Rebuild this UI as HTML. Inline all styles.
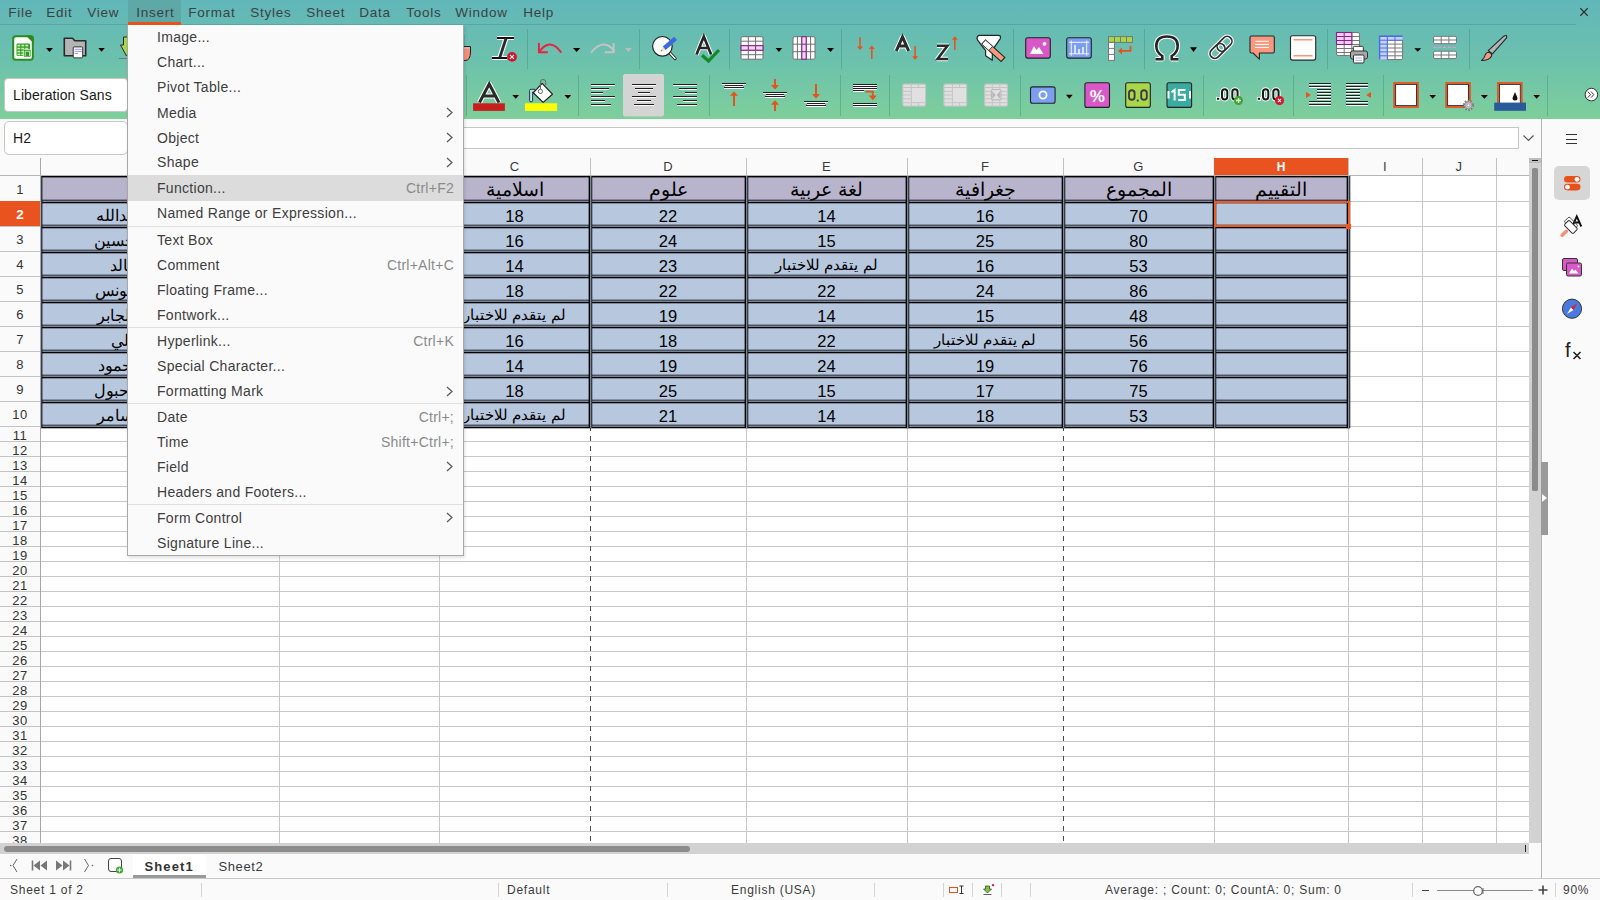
<!DOCTYPE html><html><head><meta charset="utf-8"><style>
*{margin:0;padding:0;box-sizing:border-box}
html,body{width:1600px;height:900px;overflow:hidden}
body{position:relative;font-family:"Liberation Sans",sans-serif;background:#fff;color:#333}
.a{position:absolute}
.t{white-space:nowrap;line-height:1}
.ui{font-size:13px;letter-spacing:0.55px;color:#3a3a3a}
.sm{font-size:12px;letter-spacing:0.45px;color:#3a3a3a}
svg{position:absolute;overflow:visible}
</style></head><body><div class="a" style="left:0px;top:0px;width:1600px;height:119px;background:linear-gradient(#61b6b9 0px,#66bbb5 24px,#6cc1ad 60px,#7ecf9b 119px)"></div>
<div class="a" style="left:0px;top:24px;width:1576px;height:1px;background:#5aa6a2"></div>
<div class="a" style="left:128px;top:0px;width:53px;height:22px;background:#5ea8a7"></div>
<div class="a" style="left:128px;top:22px;width:53px;height:3px;background:#e8531c"></div>
<div class="a t" style="left:8.2px;top:6px;font-size:13.5px;letter-spacing:0.75px;color:#3c4242">File</div>
<div class="a t" style="left:46.2px;top:6px;font-size:13.5px;letter-spacing:0.75px;color:#3c4242">Edit</div>
<div class="a t" style="left:87.2px;top:6px;font-size:13.5px;letter-spacing:0.75px;color:#3c4242">View</div>
<div class="a t" style="left:136.2px;top:6px;font-size:13.5px;letter-spacing:0.75px;color:#3c4242">Insert</div>
<div class="a t" style="left:188.2px;top:6px;font-size:13.5px;letter-spacing:0.75px;color:#3c4242">Format</div>
<div class="a t" style="left:250.2px;top:6px;font-size:13.5px;letter-spacing:0.75px;color:#3c4242">Styles</div>
<div class="a t" style="left:306.2px;top:6px;font-size:13.5px;letter-spacing:0.75px;color:#3c4242">Sheet</div>
<div class="a t" style="left:359.2px;top:6px;font-size:13.5px;letter-spacing:0.75px;color:#3c4242">Data</div>
<div class="a t" style="left:406.2px;top:6px;font-size:13.5px;letter-spacing:0.75px;color:#3c4242">Tools</div>
<div class="a t" style="left:455.2px;top:6px;font-size:13.5px;letter-spacing:0.75px;color:#3c4242">Window</div>
<div class="a t" style="left:523.2px;top:6px;font-size:13.5px;letter-spacing:0.75px;color:#3c4242">Help</div>
<svg style="left:1579px;top:7px" width="10" height="10"><path d="M1.3 1.3L8.7 8.7M8.7 1.3L1.3 8.7" stroke="#333" stroke-width="1.3"/></svg>
<div class="a" style="left:527px;top:29px;width:1px;height:40px;background:rgba(60,120,110,.35)"></div>
<div class="a" style="left:639px;top:29px;width:1px;height:40px;background:rgba(60,120,110,.35)"></div>
<div class="a" style="left:729px;top:29px;width:1px;height:40px;background:rgba(60,120,110,.35)"></div>
<div class="a" style="left:841px;top:29px;width:1px;height:40px;background:rgba(60,120,110,.35)"></div>
<div class="a" style="left:1013px;top:29px;width:1px;height:40px;background:rgba(60,120,110,.35)"></div>
<div class="a" style="left:1144px;top:29px;width:1px;height:40px;background:rgba(60,120,110,.35)"></div>
<div class="a" style="left:1327px;top:29px;width:1px;height:40px;background:rgba(60,120,110,.35)"></div>
<div class="a" style="left:1469px;top:29px;width:1px;height:40px;background:rgba(60,120,110,.35)"></div>
<div class="a" style="left:466px;top:75px;width:1px;height:41px;background:rgba(60,120,110,.35)"></div>
<div class="a" style="left:578px;top:75px;width:1px;height:41px;background:rgba(60,120,110,.35)"></div>
<div class="a" style="left:709px;top:75px;width:1px;height:41px;background:rgba(60,120,110,.35)"></div>
<div class="a" style="left:840px;top:75px;width:1px;height:41px;background:rgba(60,120,110,.35)"></div>
<div class="a" style="left:889px;top:75px;width:1px;height:41px;background:rgba(60,120,110,.35)"></div>
<div class="a" style="left:1020px;top:75px;width:1px;height:41px;background:rgba(60,120,110,.35)"></div>
<div class="a" style="left:1203px;top:75px;width:1px;height:41px;background:rgba(60,120,110,.35)"></div>
<div class="a" style="left:1293px;top:75px;width:1px;height:41px;background:rgba(60,120,110,.35)"></div>
<div class="a" style="left:1383px;top:75px;width:1px;height:41px;background:rgba(60,120,110,.35)"></div>
<div class="a" style="left:1547px;top:75px;width:1px;height:41px;background:rgba(60,120,110,.35)"></div>
<div class="a" style="left:4px;top:78px;width:124px;height:34px;background:#fff;border:1px solid #c8c8c8;border-radius:4px"></div>
<div class="a t" style="left:13px;top:87.5px;font-size:14px;letter-spacing:0.1px;color:#1a1a1a">Liberation Sans</div>
<div class="a" style="left:0px;top:119px;width:1541px;height:39px;background:#fafafa"></div>
<div class="a" style="left:4px;top:121px;width:124px;height:34px;background:#fff;border:1px solid #c8c8c8;border-radius:5px"></div>
<div class="a t" style="left:13px;top:130.5px;font-size:14px;letter-spacing:0.1px;color:#1a1a1a">H2</div>
<div class="a" style="left:300px;top:127px;width:1219px;height:22px;background:#fff;border:1px solid #c6c6c6"></div>
<svg style="left:1523px;top:135px" width="11" height="7"><path d="M0.5 0.5L5.5 5.5L10.5 0.5" stroke="#555" stroke-width="1.2" fill="none"/></svg>
<div class="a" style="left:1541px;top:119px;width:59px;height:759px;background:#fafafa;border-left:1px solid #b4b4b4"></div>
<div class="a" style="left:1566px;top:134px;width:11px;height:1.3px;background:#333"></div>
<div class="a" style="left:1566px;top:138.5px;width:11px;height:1.3px;background:#333"></div>
<div class="a" style="left:1566px;top:143px;width:11px;height:1.3px;background:#333"></div>
<div class="a" style="left:1554px;top:166px;width:36px;height:34px;background:#d6d6d6;border-radius:5px"></div>
<div class="a" style="left:1541px;top:462px;width:7px;height:73px;background:#9a9a9a"></div>
<svg style="left:1542px;top:494px" width="6" height="8"><path d="M0 0L5 4L0 8Z" fill="#fff"/></svg>
<div class="a" style="left:0px;top:158px;width:1529px;height:17px;background:#fafafa"></div>
<div class="a" style="left:40px;top:158px;width:1px;height:17px;background:#a8a8a8"></div>
<div class="a" style="left:279px;top:158px;width:1px;height:17px;background:#c0c0c0"></div>
<div class="a" style="left:439px;top:158px;width:1px;height:17px;background:#c0c0c0"></div>
<div class="a" style="left:590px;top:158px;width:1px;height:17px;background:#c0c0c0"></div>
<div class="a" style="left:746px;top:158px;width:1px;height:17px;background:#c0c0c0"></div>
<div class="a" style="left:907px;top:158px;width:1px;height:17px;background:#c0c0c0"></div>
<div class="a" style="left:1063px;top:158px;width:1px;height:17px;background:#c0c0c0"></div>
<div class="a" style="left:1214px;top:158px;width:1px;height:17px;background:#c0c0c0"></div>
<div class="a" style="left:1348px;top:158px;width:1px;height:17px;background:#c0c0c0"></div>
<div class="a" style="left:1422px;top:158px;width:1px;height:17px;background:#c0c0c0"></div>
<div class="a" style="left:1496px;top:158px;width:1px;height:17px;background:#c0c0c0"></div>
<div class="a" style="left:0px;top:175px;width:1529px;height:1px;background:#b4b4b4"></div>
<div class="a" style="left:1214px;top:158px;width:134px;height:17px;background:#e8531f"></div>
<div class="a t" style="left:40px;top:159.8px;width:239px;text-align:center;font-size:13px;letter-spacing:0.3px;color:#3a3a3a">A</div>
<div class="a t" style="left:279px;top:159.8px;width:160px;text-align:center;font-size:13px;letter-spacing:0.3px;color:#3a3a3a">B</div>
<div class="a t" style="left:439px;top:159.8px;width:151px;text-align:center;font-size:13px;letter-spacing:0.3px;color:#3a3a3a">C</div>
<div class="a t" style="left:590px;top:159.8px;width:156px;text-align:center;font-size:13px;letter-spacing:0.3px;color:#3a3a3a">D</div>
<div class="a t" style="left:746px;top:159.8px;width:161px;text-align:center;font-size:13px;letter-spacing:0.3px;color:#3a3a3a">E</div>
<div class="a t" style="left:907px;top:159.8px;width:156px;text-align:center;font-size:13px;letter-spacing:0.3px;color:#3a3a3a">F</div>
<div class="a t" style="left:1063px;top:159.8px;width:151px;text-align:center;font-size:13px;letter-spacing:0.3px;color:#3a3a3a">G</div>
<div class="a t" style="left:1214px;top:161px;width:134px;text-align:center;font-size:12px;font-weight:bold;color:#fff">H</div>
<div class="a t" style="left:1348px;top:159.8px;width:74px;text-align:center;font-size:13px;letter-spacing:0.3px;color:#3a3a3a">I</div>
<div class="a t" style="left:1422px;top:159.8px;width:74px;text-align:center;font-size:13px;letter-spacing:0.3px;color:#3a3a3a">J</div>
<div class="a" style="left:0px;top:176px;width:40px;height:667px;background:#fafafa"></div>
<div class="a" style="left:40px;top:176px;width:1px;height:667px;background:#a8a8a8"></div>
<div class="a t" style="left:0;top:182.5px;width:40px;text-align:center;font-size:13px;letter-spacing:0.4px;color:#333">1</div>
<div class="a" style="left:0px;top:201px;width:40px;height:1px;background:#c4c4c4"></div>
<div class="a" style="left:0px;top:201px;width:40px;height:25px;background:#e8531f"></div>
<div class="a t" style="left:0;top:208px;width:40px;text-align:center;font-size:13.5px;font-weight:bold;color:#fff">2</div>
<div class="a" style="left:0px;top:226px;width:40px;height:1px;background:#c4c4c4"></div>
<div class="a t" style="left:0;top:232.5px;width:40px;text-align:center;font-size:13px;letter-spacing:0.4px;color:#333">3</div>
<div class="a" style="left:0px;top:251px;width:40px;height:1px;background:#c4c4c4"></div>
<div class="a t" style="left:0;top:257.5px;width:40px;text-align:center;font-size:13px;letter-spacing:0.4px;color:#333">4</div>
<div class="a" style="left:0px;top:276px;width:40px;height:1px;background:#c4c4c4"></div>
<div class="a t" style="left:0;top:282.5px;width:40px;text-align:center;font-size:13px;letter-spacing:0.4px;color:#333">5</div>
<div class="a" style="left:0px;top:301px;width:40px;height:1px;background:#c4c4c4"></div>
<div class="a t" style="left:0;top:307.5px;width:40px;text-align:center;font-size:13px;letter-spacing:0.4px;color:#333">6</div>
<div class="a" style="left:0px;top:326px;width:40px;height:1px;background:#c4c4c4"></div>
<div class="a t" style="left:0;top:332.5px;width:40px;text-align:center;font-size:13px;letter-spacing:0.4px;color:#333">7</div>
<div class="a" style="left:0px;top:351px;width:40px;height:1px;background:#c4c4c4"></div>
<div class="a t" style="left:0;top:357.5px;width:40px;text-align:center;font-size:13px;letter-spacing:0.4px;color:#333">8</div>
<div class="a" style="left:0px;top:376px;width:40px;height:1px;background:#c4c4c4"></div>
<div class="a t" style="left:0;top:382.5px;width:40px;text-align:center;font-size:13px;letter-spacing:0.4px;color:#333">9</div>
<div class="a" style="left:0px;top:401px;width:40px;height:1px;background:#c4c4c4"></div>
<div class="a t" style="left:0;top:407.5px;width:40px;text-align:center;font-size:13px;letter-spacing:0.4px;color:#333">10</div>
<div class="a" style="left:0px;top:426px;width:40px;height:1px;background:#c4c4c4"></div>
<div class="a t" style="left:0;top:429px;width:40px;text-align:center;font-size:13px;letter-spacing:0.4px;color:#333">11</div>
<div class="a" style="left:0px;top:441px;width:40px;height:1px;background:#c4c4c4"></div>
<div class="a t" style="left:0;top:444px;width:40px;text-align:center;font-size:13px;letter-spacing:0.4px;color:#333">12</div>
<div class="a" style="left:0px;top:456px;width:40px;height:1px;background:#c4c4c4"></div>
<div class="a t" style="left:0;top:459px;width:40px;text-align:center;font-size:13px;letter-spacing:0.4px;color:#333">13</div>
<div class="a" style="left:0px;top:471px;width:40px;height:1px;background:#c4c4c4"></div>
<div class="a t" style="left:0;top:474px;width:40px;text-align:center;font-size:13px;letter-spacing:0.4px;color:#333">14</div>
<div class="a" style="left:0px;top:486px;width:40px;height:1px;background:#c4c4c4"></div>
<div class="a t" style="left:0;top:489px;width:40px;text-align:center;font-size:13px;letter-spacing:0.4px;color:#333">15</div>
<div class="a" style="left:0px;top:501px;width:40px;height:1px;background:#c4c4c4"></div>
<div class="a t" style="left:0;top:504px;width:40px;text-align:center;font-size:13px;letter-spacing:0.4px;color:#333">16</div>
<div class="a" style="left:0px;top:516px;width:40px;height:1px;background:#c4c4c4"></div>
<div class="a t" style="left:0;top:519px;width:40px;text-align:center;font-size:13px;letter-spacing:0.4px;color:#333">17</div>
<div class="a" style="left:0px;top:531px;width:40px;height:1px;background:#c4c4c4"></div>
<div class="a t" style="left:0;top:534px;width:40px;text-align:center;font-size:13px;letter-spacing:0.4px;color:#333">18</div>
<div class="a" style="left:0px;top:546px;width:40px;height:1px;background:#c4c4c4"></div>
<div class="a t" style="left:0;top:549px;width:40px;text-align:center;font-size:13px;letter-spacing:0.4px;color:#333">19</div>
<div class="a" style="left:0px;top:561px;width:40px;height:1px;background:#c4c4c4"></div>
<div class="a t" style="left:0;top:564px;width:40px;text-align:center;font-size:13px;letter-spacing:0.4px;color:#333">20</div>
<div class="a" style="left:0px;top:576px;width:40px;height:1px;background:#c4c4c4"></div>
<div class="a t" style="left:0;top:579px;width:40px;text-align:center;font-size:13px;letter-spacing:0.4px;color:#333">21</div>
<div class="a" style="left:0px;top:591px;width:40px;height:1px;background:#c4c4c4"></div>
<div class="a t" style="left:0;top:594px;width:40px;text-align:center;font-size:13px;letter-spacing:0.4px;color:#333">22</div>
<div class="a" style="left:0px;top:606px;width:40px;height:1px;background:#c4c4c4"></div>
<div class="a t" style="left:0;top:609px;width:40px;text-align:center;font-size:13px;letter-spacing:0.4px;color:#333">23</div>
<div class="a" style="left:0px;top:621px;width:40px;height:1px;background:#c4c4c4"></div>
<div class="a t" style="left:0;top:624px;width:40px;text-align:center;font-size:13px;letter-spacing:0.4px;color:#333">24</div>
<div class="a" style="left:0px;top:636px;width:40px;height:1px;background:#c4c4c4"></div>
<div class="a t" style="left:0;top:639px;width:40px;text-align:center;font-size:13px;letter-spacing:0.4px;color:#333">25</div>
<div class="a" style="left:0px;top:651px;width:40px;height:1px;background:#c4c4c4"></div>
<div class="a t" style="left:0;top:654px;width:40px;text-align:center;font-size:13px;letter-spacing:0.4px;color:#333">26</div>
<div class="a" style="left:0px;top:666px;width:40px;height:1px;background:#c4c4c4"></div>
<div class="a t" style="left:0;top:669px;width:40px;text-align:center;font-size:13px;letter-spacing:0.4px;color:#333">27</div>
<div class="a" style="left:0px;top:681px;width:40px;height:1px;background:#c4c4c4"></div>
<div class="a t" style="left:0;top:684px;width:40px;text-align:center;font-size:13px;letter-spacing:0.4px;color:#333">28</div>
<div class="a" style="left:0px;top:696px;width:40px;height:1px;background:#c4c4c4"></div>
<div class="a t" style="left:0;top:699px;width:40px;text-align:center;font-size:13px;letter-spacing:0.4px;color:#333">29</div>
<div class="a" style="left:0px;top:711px;width:40px;height:1px;background:#c4c4c4"></div>
<div class="a t" style="left:0;top:714px;width:40px;text-align:center;font-size:13px;letter-spacing:0.4px;color:#333">30</div>
<div class="a" style="left:0px;top:726px;width:40px;height:1px;background:#c4c4c4"></div>
<div class="a t" style="left:0;top:729px;width:40px;text-align:center;font-size:13px;letter-spacing:0.4px;color:#333">31</div>
<div class="a" style="left:0px;top:741px;width:40px;height:1px;background:#c4c4c4"></div>
<div class="a t" style="left:0;top:744px;width:40px;text-align:center;font-size:13px;letter-spacing:0.4px;color:#333">32</div>
<div class="a" style="left:0px;top:756px;width:40px;height:1px;background:#c4c4c4"></div>
<div class="a t" style="left:0;top:759px;width:40px;text-align:center;font-size:13px;letter-spacing:0.4px;color:#333">33</div>
<div class="a" style="left:0px;top:771px;width:40px;height:1px;background:#c4c4c4"></div>
<div class="a t" style="left:0;top:774px;width:40px;text-align:center;font-size:13px;letter-spacing:0.4px;color:#333">34</div>
<div class="a" style="left:0px;top:786px;width:40px;height:1px;background:#c4c4c4"></div>
<div class="a t" style="left:0;top:789px;width:40px;text-align:center;font-size:13px;letter-spacing:0.4px;color:#333">35</div>
<div class="a" style="left:0px;top:801px;width:40px;height:1px;background:#c4c4c4"></div>
<div class="a t" style="left:0;top:804px;width:40px;text-align:center;font-size:13px;letter-spacing:0.4px;color:#333">36</div>
<div class="a" style="left:0px;top:816px;width:40px;height:1px;background:#c4c4c4"></div>
<div class="a t" style="left:0;top:819px;width:40px;text-align:center;font-size:13px;letter-spacing:0.4px;color:#333">37</div>
<div class="a" style="left:0px;top:831px;width:40px;height:1px;background:#c4c4c4"></div>
<div class="a t" style="left:0;top:834px;width:40px;text-align:center;font-size:13px;letter-spacing:0.4px;color:#333">38</div>
<div class="a" style="left:0px;top:846px;width:40px;height:1px;background:#c4c4c4"></div>
<div class="a" style="left:41px;top:201px;width:1488px;height:1px;background:#c8c8c8"></div>
<div class="a" style="left:41px;top:226px;width:1488px;height:1px;background:#c8c8c8"></div>
<div class="a" style="left:41px;top:251px;width:1488px;height:1px;background:#c8c8c8"></div>
<div class="a" style="left:41px;top:276px;width:1488px;height:1px;background:#c8c8c8"></div>
<div class="a" style="left:41px;top:301px;width:1488px;height:1px;background:#c8c8c8"></div>
<div class="a" style="left:41px;top:326px;width:1488px;height:1px;background:#c8c8c8"></div>
<div class="a" style="left:41px;top:351px;width:1488px;height:1px;background:#c8c8c8"></div>
<div class="a" style="left:41px;top:376px;width:1488px;height:1px;background:#c8c8c8"></div>
<div class="a" style="left:41px;top:401px;width:1488px;height:1px;background:#c8c8c8"></div>
<div class="a" style="left:41px;top:426px;width:1488px;height:1px;background:#c8c8c8"></div>
<div class="a" style="left:41px;top:441px;width:1488px;height:1px;background:#c8c8c8"></div>
<div class="a" style="left:41px;top:456px;width:1488px;height:1px;background:#c8c8c8"></div>
<div class="a" style="left:41px;top:471px;width:1488px;height:1px;background:#c8c8c8"></div>
<div class="a" style="left:41px;top:486px;width:1488px;height:1px;background:#c8c8c8"></div>
<div class="a" style="left:41px;top:501px;width:1488px;height:1px;background:#c8c8c8"></div>
<div class="a" style="left:41px;top:516px;width:1488px;height:1px;background:#c8c8c8"></div>
<div class="a" style="left:41px;top:531px;width:1488px;height:1px;background:#c8c8c8"></div>
<div class="a" style="left:41px;top:546px;width:1488px;height:1px;background:#c8c8c8"></div>
<div class="a" style="left:41px;top:561px;width:1488px;height:1px;background:#c8c8c8"></div>
<div class="a" style="left:41px;top:576px;width:1488px;height:1px;background:#c8c8c8"></div>
<div class="a" style="left:41px;top:591px;width:1488px;height:1px;background:#c8c8c8"></div>
<div class="a" style="left:41px;top:606px;width:1488px;height:1px;background:#c8c8c8"></div>
<div class="a" style="left:41px;top:621px;width:1488px;height:1px;background:#c8c8c8"></div>
<div class="a" style="left:41px;top:636px;width:1488px;height:1px;background:#c8c8c8"></div>
<div class="a" style="left:41px;top:651px;width:1488px;height:1px;background:#c8c8c8"></div>
<div class="a" style="left:41px;top:666px;width:1488px;height:1px;background:#c8c8c8"></div>
<div class="a" style="left:41px;top:681px;width:1488px;height:1px;background:#c8c8c8"></div>
<div class="a" style="left:41px;top:696px;width:1488px;height:1px;background:#c8c8c8"></div>
<div class="a" style="left:41px;top:711px;width:1488px;height:1px;background:#c8c8c8"></div>
<div class="a" style="left:41px;top:726px;width:1488px;height:1px;background:#c8c8c8"></div>
<div class="a" style="left:41px;top:741px;width:1488px;height:1px;background:#c8c8c8"></div>
<div class="a" style="left:41px;top:756px;width:1488px;height:1px;background:#c8c8c8"></div>
<div class="a" style="left:41px;top:771px;width:1488px;height:1px;background:#c8c8c8"></div>
<div class="a" style="left:41px;top:786px;width:1488px;height:1px;background:#c8c8c8"></div>
<div class="a" style="left:41px;top:801px;width:1488px;height:1px;background:#c8c8c8"></div>
<div class="a" style="left:41px;top:816px;width:1488px;height:1px;background:#c8c8c8"></div>
<div class="a" style="left:41px;top:831px;width:1488px;height:1px;background:#c8c8c8"></div>
<div class="a" style="left:41px;top:846px;width:1488px;height:1px;background:#c8c8c8"></div>
<div class="a" style="left:279px;top:176px;width:1px;height:667px;background:#c8c8c8"></div>
<div class="a" style="left:439px;top:176px;width:1px;height:667px;background:#c8c8c8"></div>
<div class="a" style="left:590px;top:176px;width:1px;height:250px;background:#c8c8c8"></div>
<div class="a" style="left:746px;top:176px;width:1px;height:667px;background:#c8c8c8"></div>
<div class="a" style="left:907px;top:176px;width:1px;height:667px;background:#c8c8c8"></div>
<div class="a" style="left:1063px;top:176px;width:1px;height:250px;background:#c8c8c8"></div>
<div class="a" style="left:1214px;top:176px;width:1px;height:667px;background:#c8c8c8"></div>
<div class="a" style="left:1348px;top:176px;width:1px;height:667px;background:#c8c8c8"></div>
<div class="a" style="left:1422px;top:176px;width:1px;height:667px;background:#c8c8c8"></div>
<div class="a" style="left:1496px;top:176px;width:1px;height:667px;background:#c8c8c8"></div>
<div class="a" style="left:590px;top:426px;width:1px;height:417px;background:repeating-linear-gradient(#4a4a4a 0 5px,transparent 5px 10px)"></div>
<div class="a" style="left:1063px;top:426px;width:1px;height:417px;background:repeating-linear-gradient(#4a4a4a 0 5px,transparent 5px 10px)"></div>
<div class="a" style="left:41px;top:176px;width:1307px;height:25px;background:#b8b4cc"></div>
<div class="a" style="left:41px;top:201px;width:1307px;height:225px;background:#b7c8de"></div>
<div class="a" style="left:41px;top:199px;width:1309px;height:1px;background:rgba(40,45,60,.35)"></div>
<div class="a" style="left:41px;top:200px;width:1309px;height:1px;background:#47425a"></div>
<div class="a" style="left:41px;top:201px;width:1309px;height:1px;background:#768494"></div>
<div class="a" style="left:41px;top:202px;width:1309px;height:1px;background:#000"></div>
<div class="a" style="left:41px;top:203px;width:1309px;height:1px;background:rgba(0,0,0,.3)"></div>
<div class="a" style="left:41px;top:224px;width:1309px;height:1px;background:rgba(40,45,60,.35)"></div>
<div class="a" style="left:41px;top:225px;width:1309px;height:1px;background:#4a5462"></div>
<div class="a" style="left:41px;top:226px;width:1309px;height:1px;background:#768494"></div>
<div class="a" style="left:41px;top:227px;width:1309px;height:1px;background:#000"></div>
<div class="a" style="left:41px;top:228px;width:1309px;height:1px;background:rgba(0,0,0,.3)"></div>
<div class="a" style="left:41px;top:249px;width:1309px;height:1px;background:rgba(40,45,60,.35)"></div>
<div class="a" style="left:41px;top:250px;width:1309px;height:1px;background:#4a5462"></div>
<div class="a" style="left:41px;top:251px;width:1309px;height:1px;background:#768494"></div>
<div class="a" style="left:41px;top:252px;width:1309px;height:1px;background:#000"></div>
<div class="a" style="left:41px;top:253px;width:1309px;height:1px;background:rgba(0,0,0,.3)"></div>
<div class="a" style="left:41px;top:274px;width:1309px;height:1px;background:rgba(40,45,60,.35)"></div>
<div class="a" style="left:41px;top:275px;width:1309px;height:1px;background:#4a5462"></div>
<div class="a" style="left:41px;top:276px;width:1309px;height:1px;background:#768494"></div>
<div class="a" style="left:41px;top:277px;width:1309px;height:1px;background:#000"></div>
<div class="a" style="left:41px;top:278px;width:1309px;height:1px;background:rgba(0,0,0,.3)"></div>
<div class="a" style="left:41px;top:299px;width:1309px;height:1px;background:rgba(40,45,60,.35)"></div>
<div class="a" style="left:41px;top:300px;width:1309px;height:1px;background:#4a5462"></div>
<div class="a" style="left:41px;top:301px;width:1309px;height:1px;background:#768494"></div>
<div class="a" style="left:41px;top:302px;width:1309px;height:1px;background:#000"></div>
<div class="a" style="left:41px;top:303px;width:1309px;height:1px;background:rgba(0,0,0,.3)"></div>
<div class="a" style="left:41px;top:324px;width:1309px;height:1px;background:rgba(40,45,60,.35)"></div>
<div class="a" style="left:41px;top:325px;width:1309px;height:1px;background:#4a5462"></div>
<div class="a" style="left:41px;top:326px;width:1309px;height:1px;background:#768494"></div>
<div class="a" style="left:41px;top:327px;width:1309px;height:1px;background:#000"></div>
<div class="a" style="left:41px;top:328px;width:1309px;height:1px;background:rgba(0,0,0,.3)"></div>
<div class="a" style="left:41px;top:349px;width:1309px;height:1px;background:rgba(40,45,60,.35)"></div>
<div class="a" style="left:41px;top:350px;width:1309px;height:1px;background:#4a5462"></div>
<div class="a" style="left:41px;top:351px;width:1309px;height:1px;background:#768494"></div>
<div class="a" style="left:41px;top:352px;width:1309px;height:1px;background:#000"></div>
<div class="a" style="left:41px;top:353px;width:1309px;height:1px;background:rgba(0,0,0,.3)"></div>
<div class="a" style="left:41px;top:374px;width:1309px;height:1px;background:rgba(40,45,60,.35)"></div>
<div class="a" style="left:41px;top:375px;width:1309px;height:1px;background:#4a5462"></div>
<div class="a" style="left:41px;top:376px;width:1309px;height:1px;background:#768494"></div>
<div class="a" style="left:41px;top:377px;width:1309px;height:1px;background:#000"></div>
<div class="a" style="left:41px;top:378px;width:1309px;height:1px;background:rgba(0,0,0,.3)"></div>
<div class="a" style="left:41px;top:399px;width:1309px;height:1px;background:rgba(40,45,60,.35)"></div>
<div class="a" style="left:41px;top:400px;width:1309px;height:1px;background:#4a5462"></div>
<div class="a" style="left:41px;top:401px;width:1309px;height:1px;background:#768494"></div>
<div class="a" style="left:41px;top:402px;width:1309px;height:1px;background:#000"></div>
<div class="a" style="left:41px;top:403px;width:1309px;height:1px;background:rgba(0,0,0,.3)"></div>
<div class="a" style="left:41px;top:424px;width:1309px;height:1px;background:rgba(40,45,60,.35)"></div>
<div class="a" style="left:41px;top:425px;width:1309px;height:1px;background:#4a5462"></div>
<div class="a" style="left:41px;top:426px;width:1309px;height:1px;background:#768494"></div>
<div class="a" style="left:41px;top:427px;width:1309px;height:1px;background:#000"></div>
<div class="a" style="left:41px;top:428px;width:1309px;height:1px;background:rgba(0,0,0,.3)"></div>
<div class="a" style="left:41px;top:176px;width:1309px;height:1px;background:#000"></div>
<div class="a" style="left:41px;top:177px;width:1309px;height:1px;background:rgba(0,0,0,.4)"></div>
<div class="a" style="left:277px;top:176px;width:1px;height:252px;background:rgba(0,0,0,.35)"></div>
<div class="a" style="left:278px;top:176px;width:1px;height:252px;background:#000"></div>
<div class="a" style="left:279px;top:176px;width:1px;height:252px;background:#7a8898"></div>
<div class="a" style="left:280px;top:176px;width:1px;height:252px;background:#343c46"></div>
<div class="a" style="left:281px;top:176px;width:1px;height:252px;background:rgba(0,0,0,.25)"></div>
<div class="a" style="left:437px;top:176px;width:1px;height:252px;background:rgba(0,0,0,.35)"></div>
<div class="a" style="left:438px;top:176px;width:1px;height:252px;background:#000"></div>
<div class="a" style="left:439px;top:176px;width:1px;height:252px;background:#7a8898"></div>
<div class="a" style="left:440px;top:176px;width:1px;height:252px;background:#343c46"></div>
<div class="a" style="left:441px;top:176px;width:1px;height:252px;background:rgba(0,0,0,.25)"></div>
<div class="a" style="left:588px;top:176px;width:1px;height:252px;background:rgba(0,0,0,.35)"></div>
<div class="a" style="left:589px;top:176px;width:1px;height:252px;background:#000"></div>
<div class="a" style="left:590px;top:176px;width:1px;height:252px;background:#7a8898"></div>
<div class="a" style="left:591px;top:176px;width:1px;height:252px;background:#343c46"></div>
<div class="a" style="left:592px;top:176px;width:1px;height:252px;background:rgba(0,0,0,.25)"></div>
<div class="a" style="left:744px;top:176px;width:1px;height:252px;background:rgba(0,0,0,.35)"></div>
<div class="a" style="left:745px;top:176px;width:1px;height:252px;background:#000"></div>
<div class="a" style="left:746px;top:176px;width:1px;height:252px;background:#7a8898"></div>
<div class="a" style="left:747px;top:176px;width:1px;height:252px;background:#343c46"></div>
<div class="a" style="left:748px;top:176px;width:1px;height:252px;background:rgba(0,0,0,.25)"></div>
<div class="a" style="left:905px;top:176px;width:1px;height:252px;background:rgba(0,0,0,.35)"></div>
<div class="a" style="left:906px;top:176px;width:1px;height:252px;background:#000"></div>
<div class="a" style="left:907px;top:176px;width:1px;height:252px;background:#7a8898"></div>
<div class="a" style="left:908px;top:176px;width:1px;height:252px;background:#343c46"></div>
<div class="a" style="left:909px;top:176px;width:1px;height:252px;background:rgba(0,0,0,.25)"></div>
<div class="a" style="left:1061px;top:176px;width:1px;height:252px;background:rgba(0,0,0,.35)"></div>
<div class="a" style="left:1062px;top:176px;width:1px;height:252px;background:#000"></div>
<div class="a" style="left:1063px;top:176px;width:1px;height:252px;background:#7a8898"></div>
<div class="a" style="left:1064px;top:176px;width:1px;height:252px;background:#343c46"></div>
<div class="a" style="left:1065px;top:176px;width:1px;height:252px;background:rgba(0,0,0,.25)"></div>
<div class="a" style="left:1212px;top:176px;width:1px;height:252px;background:rgba(0,0,0,.35)"></div>
<div class="a" style="left:1213px;top:176px;width:1px;height:252px;background:#000"></div>
<div class="a" style="left:1214px;top:176px;width:1px;height:252px;background:#7a8898"></div>
<div class="a" style="left:1215px;top:176px;width:1px;height:252px;background:#343c46"></div>
<div class="a" style="left:1216px;top:176px;width:1px;height:252px;background:rgba(0,0,0,.25)"></div>
<div class="a" style="left:1346px;top:176px;width:1px;height:252px;background:rgba(0,0,0,.35)"></div>
<div class="a" style="left:1347px;top:176px;width:1px;height:252px;background:#000"></div>
<div class="a" style="left:1348px;top:176px;width:1px;height:252px;background:#7a8898"></div>
<div class="a" style="left:1349px;top:176px;width:1px;height:252px;background:#343c46"></div>
<div class="a" style="left:1350px;top:176px;width:1px;height:252px;background:rgba(0,0,0,.25)"></div>
<div class="a" style="left:41px;top:176px;width:1px;height:252px;background:#333a48"></div>
<div class="a" style="left:42px;top:176px;width:1px;height:252px;background:rgba(0,0,0,.35)"></div>
<div class="a t" style="left:439px;top:176px;width:151px;height:25px;line-height:26px;padding-top:1px;text-align:center;font-size:18.5px;color:#000">اسلامية</div>
<div class="a t" style="left:590px;top:176px;width:156px;height:25px;line-height:26px;padding-top:1px;text-align:center;font-size:18.5px;color:#000">علوم</div>
<div class="a t" style="left:746px;top:176px;width:161px;height:25px;line-height:26px;padding-top:1px;text-align:center;font-size:18.5px;color:#000">لغة عربية</div>
<div class="a t" style="left:907px;top:176px;width:156px;height:25px;line-height:26px;padding-top:1px;text-align:center;font-size:18.5px;color:#000">جغرافية</div>
<div class="a t" style="left:1063px;top:176px;width:151px;height:25px;line-height:26px;padding-top:1px;text-align:center;font-size:18.5px;color:#000">المجموع</div>
<div class="a t" style="left:1214px;top:176px;width:134px;height:25px;line-height:26px;padding-top:1px;text-align:center;font-size:18.5px;color:#000">التقييم</div>
<div class="a t" style="left:439px;top:201px;width:151px;height:25px;line-height:26px;padding-top:1.8px;text-align:center;font-size:16.5px;color:#000">18</div>
<div class="a t" style="left:590px;top:201px;width:156px;height:25px;line-height:26px;padding-top:1.8px;text-align:center;font-size:16.5px;color:#000">22</div>
<div class="a t" style="left:746px;top:201px;width:161px;height:25px;line-height:26px;padding-top:1.8px;text-align:center;font-size:16.5px;color:#000">14</div>
<div class="a t" style="left:907px;top:201px;width:156px;height:25px;line-height:26px;padding-top:1.8px;text-align:center;font-size:16.5px;color:#000">16</div>
<div class="a t" style="left:1063px;top:201px;width:151px;height:25px;line-height:26px;padding-top:1.8px;text-align:center;font-size:16.5px;color:#000">70</div>
<div class="a t" style="left:439px;top:226px;width:151px;height:25px;line-height:26px;padding-top:1.8px;text-align:center;font-size:16.5px;color:#000">16</div>
<div class="a t" style="left:590px;top:226px;width:156px;height:25px;line-height:26px;padding-top:1.8px;text-align:center;font-size:16.5px;color:#000">24</div>
<div class="a t" style="left:746px;top:226px;width:161px;height:25px;line-height:26px;padding-top:1.8px;text-align:center;font-size:16.5px;color:#000">15</div>
<div class="a t" style="left:907px;top:226px;width:156px;height:25px;line-height:26px;padding-top:1.8px;text-align:center;font-size:16.5px;color:#000">25</div>
<div class="a t" style="left:1063px;top:226px;width:151px;height:25px;line-height:26px;padding-top:1.8px;text-align:center;font-size:16.5px;color:#000">80</div>
<div class="a t" style="left:439px;top:251px;width:151px;height:25px;line-height:26px;padding-top:1.8px;text-align:center;font-size:16.5px;color:#000">14</div>
<div class="a t" style="left:590px;top:251px;width:156px;height:25px;line-height:26px;padding-top:1.8px;text-align:center;font-size:16.5px;color:#000">23</div>
<div class="a t" style="left:746px;top:251px;width:161px;height:25px;line-height:26px;padding-top:1px;text-align:center;font-size:14.5px;color:#000">لم يتقدم للاختبار</div>
<div class="a t" style="left:907px;top:251px;width:156px;height:25px;line-height:26px;padding-top:1.8px;text-align:center;font-size:16.5px;color:#000">16</div>
<div class="a t" style="left:1063px;top:251px;width:151px;height:25px;line-height:26px;padding-top:1.8px;text-align:center;font-size:16.5px;color:#000">53</div>
<div class="a t" style="left:439px;top:276px;width:151px;height:25px;line-height:26px;padding-top:1.8px;text-align:center;font-size:16.5px;color:#000">18</div>
<div class="a t" style="left:590px;top:276px;width:156px;height:25px;line-height:26px;padding-top:1.8px;text-align:center;font-size:16.5px;color:#000">22</div>
<div class="a t" style="left:746px;top:276px;width:161px;height:25px;line-height:26px;padding-top:1.8px;text-align:center;font-size:16.5px;color:#000">22</div>
<div class="a t" style="left:907px;top:276px;width:156px;height:25px;line-height:26px;padding-top:1.8px;text-align:center;font-size:16.5px;color:#000">24</div>
<div class="a t" style="left:1063px;top:276px;width:151px;height:25px;line-height:26px;padding-top:1.8px;text-align:center;font-size:16.5px;color:#000">86</div>
<div class="a t" style="left:439px;top:301px;width:151px;height:25px;line-height:26px;padding-top:1px;text-align:center;font-size:14.5px;color:#000">لم يتقدم للاختبار</div>
<div class="a t" style="left:590px;top:301px;width:156px;height:25px;line-height:26px;padding-top:1.8px;text-align:center;font-size:16.5px;color:#000">19</div>
<div class="a t" style="left:746px;top:301px;width:161px;height:25px;line-height:26px;padding-top:1.8px;text-align:center;font-size:16.5px;color:#000">14</div>
<div class="a t" style="left:907px;top:301px;width:156px;height:25px;line-height:26px;padding-top:1.8px;text-align:center;font-size:16.5px;color:#000">15</div>
<div class="a t" style="left:1063px;top:301px;width:151px;height:25px;line-height:26px;padding-top:1.8px;text-align:center;font-size:16.5px;color:#000">48</div>
<div class="a t" style="left:439px;top:326px;width:151px;height:25px;line-height:26px;padding-top:1.8px;text-align:center;font-size:16.5px;color:#000">16</div>
<div class="a t" style="left:590px;top:326px;width:156px;height:25px;line-height:26px;padding-top:1.8px;text-align:center;font-size:16.5px;color:#000">18</div>
<div class="a t" style="left:746px;top:326px;width:161px;height:25px;line-height:26px;padding-top:1.8px;text-align:center;font-size:16.5px;color:#000">22</div>
<div class="a t" style="left:907px;top:326px;width:156px;height:25px;line-height:26px;padding-top:1px;text-align:center;font-size:14.5px;color:#000">لم يتقدم للاختبار</div>
<div class="a t" style="left:1063px;top:326px;width:151px;height:25px;line-height:26px;padding-top:1.8px;text-align:center;font-size:16.5px;color:#000">56</div>
<div class="a t" style="left:439px;top:351px;width:151px;height:25px;line-height:26px;padding-top:1.8px;text-align:center;font-size:16.5px;color:#000">14</div>
<div class="a t" style="left:590px;top:351px;width:156px;height:25px;line-height:26px;padding-top:1.8px;text-align:center;font-size:16.5px;color:#000">19</div>
<div class="a t" style="left:746px;top:351px;width:161px;height:25px;line-height:26px;padding-top:1.8px;text-align:center;font-size:16.5px;color:#000">24</div>
<div class="a t" style="left:907px;top:351px;width:156px;height:25px;line-height:26px;padding-top:1.8px;text-align:center;font-size:16.5px;color:#000">19</div>
<div class="a t" style="left:1063px;top:351px;width:151px;height:25px;line-height:26px;padding-top:1.8px;text-align:center;font-size:16.5px;color:#000">76</div>
<div class="a t" style="left:439px;top:376px;width:151px;height:25px;line-height:26px;padding-top:1.8px;text-align:center;font-size:16.5px;color:#000">18</div>
<div class="a t" style="left:590px;top:376px;width:156px;height:25px;line-height:26px;padding-top:1.8px;text-align:center;font-size:16.5px;color:#000">25</div>
<div class="a t" style="left:746px;top:376px;width:161px;height:25px;line-height:26px;padding-top:1.8px;text-align:center;font-size:16.5px;color:#000">15</div>
<div class="a t" style="left:907px;top:376px;width:156px;height:25px;line-height:26px;padding-top:1.8px;text-align:center;font-size:16.5px;color:#000">17</div>
<div class="a t" style="left:1063px;top:376px;width:151px;height:25px;line-height:26px;padding-top:1.8px;text-align:center;font-size:16.5px;color:#000">75</div>
<div class="a t" style="left:439px;top:401px;width:151px;height:25px;line-height:26px;padding-top:1px;text-align:center;font-size:14.5px;color:#000">لم يتقدم للاختبار</div>
<div class="a t" style="left:590px;top:401px;width:156px;height:25px;line-height:26px;padding-top:1.8px;text-align:center;font-size:16.5px;color:#000">21</div>
<div class="a t" style="left:746px;top:401px;width:161px;height:25px;line-height:26px;padding-top:1.8px;text-align:center;font-size:16.5px;color:#000">14</div>
<div class="a t" style="left:907px;top:401px;width:156px;height:25px;line-height:26px;padding-top:1.8px;text-align:center;font-size:16.5px;color:#000">18</div>
<div class="a t" style="left:1063px;top:401px;width:151px;height:25px;line-height:26px;padding-top:1.8px;text-align:center;font-size:16.5px;color:#000">53</div>
<div class="a t" style="left:96px;top:201px;height:25px;line-height:26px;padding-top:2px;font-size:16px;color:#000;direction:rtl">علي حسن عبدالله</div>
<div class="a t" style="left:94px;top:226px;height:25px;line-height:26px;padding-top:2px;font-size:16px;color:#000;direction:rtl">محمد علي حسين</div>
<div class="a t" style="left:110px;top:251px;height:25px;line-height:26px;padding-top:2px;font-size:16px;color:#000;direction:rtl">أحمد محمد خالد</div>
<div class="a t" style="left:95px;top:276px;height:25px;line-height:26px;padding-top:2px;font-size:16px;color:#000;direction:rtl">سعيد احمد يونس</div>
<div class="a t" style="left:97px;top:301px;height:25px;line-height:26px;padding-top:2px;font-size:16px;color:#000;direction:rtl">محمد عبد الجابر</div>
<div class="a t" style="left:111px;top:326px;height:25px;line-height:26px;padding-top:2px;font-size:16px;color:#000;direction:rtl">حسن محمد علي</div>
<div class="a t" style="left:98px;top:351px;height:25px;line-height:26px;padding-top:2px;font-size:16px;color:#000;direction:rtl">احمد علي محمود</div>
<div class="a t" style="left:94px;top:376px;height:25px;line-height:26px;padding-top:2px;font-size:16px;color:#000;direction:rtl">علي احمد حبول</div>
<div class="a t" style="left:97px;top:401px;height:25px;line-height:26px;padding-top:2px;font-size:16px;color:#000;direction:rtl">محمد علي سامر</div>
<div class="a" style="left:1214px;top:201px;width:136px;height:26px;border:2px solid #f0581e"></div>
<div class="a" style="left:1346px;top:224px;width:5px;height:5px;background:#f0581e"></div>
<div class="a" style="left:0px;top:843px;width:1529px;height:11px;background:#d2d2d2"></div>
<div class="a" style="left:4px;top:846px;width:686px;height:6px;background:#8c8c8c;border-radius:3px"></div>
<div class="a" style="left:1529px;top:843px;width:12px;height:11px;background:#fafafa"></div>
<div class="a" style="left:1525px;top:845px;width:1px;height:7px;background:#222"></div>
<div class="a" style="left:1529px;top:158px;width:12px;height:685px;background:#d2d2d2"></div>
<div class="a" style="left:1529px;top:158px;width:12px;height:5px;background:#bdbdbd"></div>
<div class="a" style="left:1532px;top:159.8px;width:6px;height:1.5px;background:#111"></div>
<div class="a" style="left:1532px;top:168px;width:6px;height:323px;background:#8c8c8c;border-radius:1.5px"></div>
<div class="a" style="left:0px;top:854px;width:1541px;height:24px;background:#fafafa"></div>
<div class="a" style="left:0px;top:878px;width:1600px;height:1px;background:#c8c8c8"></div>
<div class="a" style="left:133px;top:855px;width:73px;height:23px;background:#fff"></div>
<div class="a" style="left:133px;top:875px;width:73px;height:3px;background:#9a9a9a"></div>
<div class="a t" style="left:144.5px;top:859.5px;font-size:13px;font-weight:bold;letter-spacing:1.1px;color:#333">Sheet1</div>
<div class="a t" style="left:218.5px;top:859.5px;font-size:13px;letter-spacing:0.6px;color:#3a3a3a">Sheet2</div>
<div class="a" style="left:0px;top:879px;width:1600px;height:21px;background:#fafafa"></div>
<div class="a" style="left:201px;top:883px;width:1px;height:14px;background:#d4d4d4"></div>
<div class="a" style="left:498px;top:883px;width:1px;height:14px;background:#d4d4d4"></div>
<div class="a" style="left:667px;top:883px;width:1px;height:14px;background:#d4d4d4"></div>
<div class="a" style="left:874px;top:883px;width:1px;height:14px;background:#d4d4d4"></div>
<div class="a" style="left:943px;top:883px;width:1px;height:14px;background:#d4d4d4"></div>
<div class="a" style="left:972px;top:883px;width:1px;height:14px;background:#d4d4d4"></div>
<div class="a" style="left:1001px;top:883px;width:1px;height:14px;background:#d4d4d4"></div>
<div class="a" style="left:1030px;top:883px;width:1px;height:14px;background:#d4d4d4"></div>
<div class="a" style="left:1412px;top:883px;width:1px;height:14px;background:#d4d4d4"></div>
<div class="a" style="left:1555px;top:883px;width:1px;height:14px;background:#d4d4d4"></div>
<div class="a t" style="left:10px;top:884px;font-size:12px;letter-spacing:0.75px;color:#3a3a3a">Sheet 1 of 2</div>
<div class="a t" style="left:507px;top:884px;font-size:12px;letter-spacing:0.75px;color:#3a3a3a">Default</div>
<div class="a t" style="left:731px;top:884px;font-size:12px;letter-spacing:0.75px;color:#3a3a3a">English (USA)</div>
<div class="a t" style="left:1105px;top:884px;font-size:12px;letter-spacing:0.76px;color:#3a3a3a">Average: ; Count: 0; CountA: 0; Sum: 0</div>
<div class="a t" style="left:1563px;top:884px;font-size:12px;letter-spacing:0.75px;color:#3a3a3a">90%</div>
<div class="a" style="left:1422px;top:889.5px;width:7px;height:1.8px;background:#444"></div>
<div class="a" style="left:1437px;top:890px;width:96px;height:1.2px;background:#8a8a8a"></div>
<svg style="left:1472px;top:884.5px" width="12" height="12"><circle cx="6" cy="6" r="4.3" fill="#fff" stroke="#666" stroke-width="1.2"/><path d="M11 3V9" stroke="#666"/></svg>
<svg style="left:1538px;top:884.5px" width="10" height="10"><path d="M5 0.5V9.5M0.5 5H9.5" stroke="#444" stroke-width="1.6"/></svg>
<svg class="a" style="left:0;top:0" width="1600" height="120" viewBox="0 0 1600 120"><rect x="13.2" y="36.2" width="19.6" height="23.6" rx="2.5" fill="#fff" stroke="#2e8a1e" stroke-width="2"/><path d="M25.5 35.2H30.8Q33.8 35.2 33.8 38.2V43.5Z" fill="#2e8a1e"/><rect x="16.5" y="43.5" width="13.5" height="12.5" rx="1.2" fill="#2e9a22"/><rect x="17.3" y="44.7" width="3" height="1.7" fill="#c8f0b8"/><rect x="21.3" y="44.7" width="3" height="1.7" fill="#c8f0b8"/><rect x="25.3" y="44.7" width="3" height="1.7" fill="#c8f0b8"/><rect x="17.3" y="47.7" width="3" height="1.7" fill="#c8f0b8"/><rect x="21.3" y="47.7" width="3" height="1.7" fill="#c8f0b8"/><rect x="25.3" y="47.7" width="3" height="1.7" fill="#c8f0b8"/><rect x="17.3" y="50.7" width="3" height="1.7" fill="#c8f0b8"/><rect x="21.3" y="50.7" width="3" height="1.7" fill="#c8f0b8"/><rect x="25.3" y="50.7" width="3" height="1.7" fill="#c8f0b8"/><rect x="17.3" y="53.6" width="3" height="1.7" fill="#c8f0b8"/><rect x="21.3" y="53.6" width="3" height="1.7" fill="#c8f0b8"/><rect x="25.3" y="53.6" width="3" height="1.7" fill="#c8f0b8"/><rect x="23.5" y="49.5" width="7.5" height="7.5" rx="1" fill="#2e9a22" stroke="#fff" stroke-width="0.6"/><path d="M25.2 56V51.2H29.6V56" stroke="#c8f0b8" stroke-width="1" fill="none"/><path d="M46 48H53L49.5 52Z" fill="#000"/><path d="M64.3 38.2H72.5L74.8 40.7H85.7V55.7H64.3Z" fill="#b4b4b4" stroke="#2a2a2a" stroke-width="1.6" stroke-linejoin="round"/><rect x="73.2" y="46.9" width="9.5" height="11" rx="1" fill="#fff" stroke="#333" stroke-width="1"/><path d="M74.5 49.3H81.8M74.5 51.4H81.8M74.5 53.5H78" stroke="#9a9af5" stroke-width="1"/><path d="M98.3 48H104.8L101.55 51.8Z" fill="#000"/><path d="M123.5 37H130V45H133L126.5 56L120.5 45H123.5Z" fill="#a8d848" stroke="#2a2a2a" stroke-width="1"/><path d="M119 58.5H132" stroke="#777" stroke-width="1"/><path d="M462 46.5H470.5V52Q470.5 60.5 465 60.5H462Z" fill="#f4907a" stroke="#222" stroke-width="1"/><path d="M462 48H470" stroke="#c8c8c8" stroke-width="1.2"/><path d="M463.5 35V46" stroke="#111" stroke-width="1.2"/><g stroke-linecap="butt"><path d="M497 38H514M492 58H507" stroke="#fff" stroke-width="4"/><path d="M506 38.5L499.8 57.5" stroke="#fff" stroke-width="5"/><path d="M497 38H514M492 58H507" stroke="#111" stroke-width="2"/><path d="M506 38.5L499.8 57.5" stroke="#2a2a2a" stroke-width="2.8"/></g><circle cx="512" cy="56.9" r="4.9" fill="#d4142a"/><path d="M510 54.9L514 58.9M514 54.9L510 58.9" stroke="#fff" stroke-width="1.1"/><path d="M539.5 51.5Q550 37 561.3 52.6" stroke="#e8233f" stroke-width="1.9" fill="none"/><path d="M538.9 43V52.2H547.8" stroke="#e8233f" stroke-width="1.9" fill="none"/><path d="M573 48H580.2L576.6 52Z" fill="#000"/><path d="M614.5 51.5Q604 37 591 52.6" stroke="#c4c4c4" stroke-width="1.9" fill="none"/><path d="M613.6 43V52.2H604.7" stroke="#c4c4c4" stroke-width="1.9" fill="none"/><path d="M625.2 48H631.8L628.5 52Z" fill="#bdbdbd"/><path d="M669 52L675 58.5" stroke="#222" stroke-width="3.2" stroke-linecap="round"/><path d="M669 52L675 58.5" stroke="#fff" stroke-width="1.4" stroke-linecap="round"/><circle cx="662.4" cy="46.3" r="9.8" fill="#fff" stroke="#222" stroke-width="1.2"/><g transform="rotate(-41 660.5 51.5)"><path d="M660.5 51.5L665.5 49.3V53.7Z" fill="#f8dcb8"/><path d="M660.5 51.5L662.3 50.7V52.3Z" fill="#777"/><rect x="665.5" y="49.3" width="15" height="4.4" fill="#3a6ae0"/></g><path d="M696.5 54.6L703.8 36.6L711.1 54.6M699.5 48H708" stroke="#fff" stroke-width="4.6" fill="none" stroke-linejoin="round"/><path d="M696.5 54.6L703.8 36.6L711.1 54.6M699.5 48H708" stroke="#262626" stroke-width="2.7" fill="none"/><path d="M702 55.3L708.5 61L719 50" stroke="#138a26" stroke-width="3.2" fill="none"/><rect x="741" y="36.7" width="22" height="22.5" rx="1.5" fill="#fff" stroke="#707070" stroke-width="1"/><path d="M748.3 36.7V59.2M755.6 36.7V59.2M741 41.2H763M741 45.7H763M741 50.2H763M741 54.7H763" stroke="#707070" stroke-width="1"/><rect x="741" y="45.7" width="22" height="4.5" fill="#f0d8f0" stroke="#8a2090" stroke-width="1.1"/><path d="M748.3 45.7V50.2M755.6 45.7V50.2" stroke="#8a2090" stroke-width="1"/><path d="M775.6 48H782.1L778.85 52Z" fill="#000"/><rect x="793" y="36.7" width="22" height="22.5" rx="1.5" fill="#fff" stroke="#707070" stroke-width="1"/><path d="M797.4 36.7V59.2M801.8 36.7V59.2M806.2 36.7V59.2M810.6 36.7V59.2M793 44.2H815M793 51.7H815" stroke="#707070" stroke-width="1"/><rect x="801.8" y="36.7" width="4.4" height="22.5" fill="#f0d8f0" stroke="#8a2090" stroke-width="1.1"/><path d="M801.8 44.2H806.2M801.8 51.7H806.2" stroke="#8a2090" stroke-width="1"/><path d="M827 48H834L830.5 52Z" fill="#000"/><path d="M860 37.2V48.1" stroke="#e8501c" stroke-width="1.5"/><path d="M857 46.6L860 50.1L863 46.6Z" fill="#e8501c"/><path d="M871.8 58.9V47.5" stroke="#e8501c" stroke-width="1.5"/><path d="M868.8 49.0L871.8 45.5L874.8 49.0Z" fill="#e8501c"/><path d="M896.3 50.8L902.5 37L908.7 50.8M898.6 46H906.4" stroke="#fff" stroke-width="5" fill="none" stroke-linejoin="round"/><path d="M896.3 50.8L902.5 37L908.7 50.8M898.6 46H906.4" stroke="#2a2a2a" stroke-width="3" fill="none"/><path d="M915.1 45.9V57.7" stroke="#e8501c" stroke-width="1.5"/><path d="M912.1 56.2L915.1 59.7L918.1 56.2Z" fill="#e8501c"/><path d="M937 45.8H947.5L937.5 59H948" stroke="#fff" stroke-width="4.6" fill="none" stroke-linejoin="round"/><path d="M937 45.8H947.5L937.5 59H948" stroke="#2a2a2a" stroke-width="2.6" fill="none"/><path d="M954.8 49.9V38.2" stroke="#e8501c" stroke-width="1.5"/><path d="M951.8 39.7L954.8 36.2L957.8 39.7Z" fill="#e8501c"/><path d="M978.8 35.3H998.3Q1001.3 35.3 1000.3 38.6L994.3 47.3L992.3 50.8V60.3L985.6 55.8V50.6L977.6 40.2Q976 37.3 978.8 35.3Z" fill="#fff" stroke="#1a2a2a" stroke-width="1.2" stroke-linejoin="round"/><g transform="rotate(42 993.3 50.8)"><rect x="980.3" y="48" width="26" height="5.6" fill="#f8987f" stroke="#1a2a2a" stroke-width="1.1"/><rect x="980.3" y="48" width="9.5" height="5.6" fill="#fff" stroke="#444" stroke-width="0.9"/></g><rect x="1025.7" y="37.8" width="24.6" height="20.3" rx="2" fill="#d858c8" stroke="#222" stroke-width="1.1"/><path d="M1030 54L1034 46L1036.5 50L1039 47L1043.5 54Z" fill="#fff"/><circle cx="1044.5" cy="43.8" r="1.9" fill="#fff"/><rect x="1066.7" y="37.8" width="24.6" height="20.3" rx="2" fill="#7b9ef0" stroke="#222" stroke-width="1.1"/><path d="M1069 42.3H1089M1069 53.8H1089M1071.3 40.5V55.8M1086.7 40.5V55.8" stroke="#fff" stroke-width="0.9"/><path d="M1075 53.8V45M1079 53.8V49M1083 53.8V47" stroke="#fff" stroke-width="1.4"/><rect x="1108.5" y="36.6" width="24" height="5.8" fill="#a8d84a" stroke="#777" stroke-width="1"/><path d="M1114.5 36.6V42.4M1120.5 36.6V42.4M1126.5 36.6V42.4" stroke="#777"/><rect x="1108.5" y="42.4" width="6" height="18" fill="#fff" stroke="#777" stroke-width="1"/><path d="M1108.5 48.4H1114.5M1108.5 54.4H1114.5" stroke="#777"/><path d="M1130.5 46V50.8H1120" stroke="#e8501c" stroke-width="1.8" fill="none"/><path d="M1122 47.5L1118 51L1122 54.5Z" fill="#e8501c"/><path d="M1155.5 59.3H1162.3V56Q1156.3 52.5 1156.3 46Q1156.3 36.5 1167 36.5Q1177.7 36.5 1177.7 46Q1177.7 52.5 1171.7 56V59.3H1178.5" stroke="#fff" stroke-width="4.6" fill="none" stroke-linejoin="round"/><path d="M1155.5 59.3H1162.3V56Q1156.3 52.5 1156.3 46Q1156.3 36.5 1167 36.5Q1177.7 36.5 1177.7 46Q1177.7 52.5 1171.7 56V59.3H1178.5" stroke="#262626" stroke-width="2.6" fill="none"/><path d="M1190 47.3H1197L1193.5 52Z" fill="#000"/><g transform="rotate(-45 1221 47.4)"><g stroke="#fff" stroke-width="3.8"><rect x="1207.5" y="42.6" width="17" height="9.6" rx="4.8" fill="none"/><rect x="1217.5" y="42.6" width="17" height="9.6" rx="4.8" fill="none"/></g><g stroke="#2e2e2e" stroke-width="1.7"><rect x="1207.5" y="42.6" width="17" height="9.6" rx="4.8" fill="none"/><rect x="1217.5" y="42.6" width="17" height="9.6" rx="4.8" fill="none"/></g></g><path d="M1251.5 36H1273Q1274.3 36 1274.3 37.5V51.6Q1274.3 53 1273 53H1259.4V59.2L1253 53H1251.5Q1250 53 1250 51.6V37.5Q1250 36 1251.5 36Z" fill="#f8987f" stroke="#1e2a2a" stroke-width="1.1" stroke-linejoin="round"/><path d="M1255 41.3H1269M1255 44.4H1269M1255 47.4H1269" stroke="#fff" stroke-width="1"/><rect x="1290.5" y="35.7" width="25.2" height="24.4" rx="2" fill="#fff" stroke="#2a2a2a" stroke-width="1.1"/><path d="M1293.5 39.8H1312.5M1293.5 55.8H1312.5" stroke="#f8987f" stroke-width="1.4"/><rect x="1336.5" y="32.5" width="23" height="23" rx="1.5" fill="#fff" stroke="#777" stroke-width="1"/><path d="M1344.2 32.5V55.5M1351.8 32.5V55.5M1336.5 36.5H1359.5M1336.5 40.5H1359.5M1336.5 44.5H1359.5M1336.5 48.5H1359.5M1336.5 52.5H1359.5" stroke="#777" stroke-width="1"/><rect x="1336.5" y="32.5" width="15.3" height="12" fill="#f0d0f0" stroke="#8a2090" stroke-width="1.1"/><path d="M1344.2 32.5V44.5M1336.5 36.5H1351.8M1336.5 40.5H1351.8" stroke="#8a2090"/><rect x="1353.3" y="46.3" width="10" height="6" rx="1" fill="#fff" stroke="#333"/><rect x="1350.5" y="51" width="17" height="8" rx="2" fill="#a8a8a8" stroke="#333"/><rect x="1353.5" y="55" width="10.5" height="8" rx="1" fill="#fff" stroke="#333"/><path d="M1355.5 58H1362M1355.5 60.3H1362" stroke="#9a9af5" stroke-width="0.8"/><rect x="1379.6" y="36.3" width="23" height="23.3" rx="1.5" fill="#fff" stroke="#777" stroke-width="1"/><path d="M1387.3 36.3V59.599999999999994M1395 36.3V59.599999999999994M1379.6 40.2H1402.6M1379.6 44.1H1402.6M1379.6 48H1402.6M1379.6 51.9H1402.6M1379.6 55.8H1402.6" stroke="#777" stroke-width="1"/><rect x="1379.6" y="36.3" width="23" height="3.9" fill="#c4d4f8"/><rect x="1379.6" y="36.3" width="7.7" height="23.3" fill="#c4d4f8"/><path d="M1379.6 40.2H1402.6M1387.3 36.3V59.6M1379.6 44.1H1387.3M1379.6 48H1387.3M1379.6 51.9H1387.3M1379.6 55.8H1387.3M1395 36.3V40.2" stroke="#4a6ae8" stroke-width="1"/><rect x="1379.6" y="36.3" width="23" height="23.3" rx="1.5" fill="none" stroke="#4a6ae8" stroke-width="0"/><path d="M1379.6 59.6V36.3H1402.6" stroke="#4a6ae8" stroke-width="1.4" fill="none"/><path d="M1414.3 48.2H1421.2L1417.75 51.8Z" fill="#000"/><rect x="1433.5" y="36.3" width="23" height="7.4" rx="1.5" fill="#fff" stroke="#777" stroke-width="1"/><path d="M1441.2 36.3V43.699999999999996M1448.9 36.3V43.699999999999996M1433.5 40H1456.5" stroke="#777" stroke-width="1"/><rect x="1433.5" y="51.2" width="23" height="7.4" rx="1.5" fill="#fff" stroke="#777" stroke-width="1"/><path d="M1441.2 51.2V58.6M1448.9 51.2V58.6M1433.5 55H1456.5" stroke="#777" stroke-width="1"/><path d="M1433.5 47.3H1456.5" stroke="#e898d8" stroke-width="1.2" stroke-dasharray="3 1.8"/><path d="M1488.2 50.6L1503.8 36.2Q1507.3 34.2 1506.6 37.8L1492.4 53.8Z" fill="#b4b4b4" stroke="#1e2a2a" stroke-width="1.1" stroke-linejoin="round"/><path d="M1488.6 52.2Q1492.2 53.2 1491.6 56Q1489.5 60.5 1481.5 60.5Q1484.3 58.3 1484.8 56Q1485.6 52.5 1488.6 52.2Z" fill="#f8987f" stroke="#1e2a2a" stroke-width="1.1" stroke-linejoin="round"/><path d="M479.5 102.5L489.2 84L498.9 102.5M483 96H495.5" stroke="#fff" stroke-width="5" fill="none" stroke-linejoin="round"/><path d="M479.5 102.5L489.2 84L498.9 102.5M483 96H495.5" stroke="#2a2a2a" stroke-width="3" fill="none"/><rect x="473.1" y="103.3" width="31.8" height="7.6" fill="#c81e1e"/><path d="M512.4 95H519L515.7 98.8Z" fill="#000"/><path d="M529.6 90.5Q529.6 89.3 531 89.3H535V92H532.6V100.8Q532.6 101.8 531.1 101.8Q529.6 101.8 529.6 100.8Z" fill="#b8e8fc" stroke="#222" stroke-width="0.9" stroke-linejoin="round"/><path d="M542.2 83.4L552.4 94.2L543.2 102.4L533.2 92.8Z" fill="#fff" stroke="#1e1e1e" stroke-width="1.2" stroke-linejoin="round"/><path d="M540.4 89.2V82.2Q540.4 79.5 543.1 79.5Q545.8 79.5 545.8 82.2V85" stroke="#666" stroke-width="1" fill="none"/><circle cx="540.4" cy="91.4" r="2.1" fill="#fff" stroke="#555" stroke-width="0.9"/><rect x="525" y="103.3" width="32.1" height="7.6" fill="#ffff00"/><path d="M564.4 95H571.2L567.8 98.8Z" fill="#000"/><path d="M624.5 74H662.5L664 75.5V115L662.5 116.6H624.5L623 115V75.5Z" fill="#d4d4d4"/><g fill="#fff" shape-rendering="crispEdges"><rect x="591" y="85" width="24" height="1.2"/><rect x="591" y="89" width="18" height="1.2"/><rect x="591" y="93" width="12" height="1.2"/><rect x="591" y="97" width="24" height="1.2"/><rect x="591" y="101" width="14" height="1.2"/><rect x="591" y="105" width="20" height="1.2"/></g><g fill="#1e1e1e" shape-rendering="crispEdges"><rect x="591" y="84" width="24" height="1"/><rect x="591" y="88" width="18" height="1"/><rect x="591" y="92" width="12" height="1"/><rect x="591" y="96" width="24" height="1"/><rect x="591" y="100" width="14" height="1"/><rect x="591" y="104" width="20" height="1"/></g><g fill="#fff" shape-rendering="crispEdges"><rect x="632" y="85" width="24" height="1.2"/><rect x="635" y="89" width="18" height="1.2"/><rect x="638" y="93" width="12" height="1.2"/><rect x="632" y="97" width="24" height="1.2"/><rect x="637" y="101" width="14" height="1.2"/><rect x="634" y="105" width="20" height="1.2"/></g><g fill="#1e1e1e" shape-rendering="crispEdges"><rect x="632" y="84" width="24" height="1"/><rect x="635" y="88" width="18" height="1"/><rect x="638" y="92" width="12" height="1"/><rect x="632" y="96" width="24" height="1"/><rect x="637" y="100" width="14" height="1"/><rect x="634" y="104" width="20" height="1"/></g><g fill="#fff" shape-rendering="crispEdges"><rect x="673" y="85" width="24" height="1.2"/><rect x="679" y="89" width="18" height="1.2"/><rect x="685" y="93" width="12" height="1.2"/><rect x="673" y="97" width="24" height="1.2"/><rect x="683" y="101" width="14" height="1.2"/><rect x="677" y="105" width="20" height="1.2"/></g><g fill="#1e1e1e" shape-rendering="crispEdges"><rect x="673" y="84" width="24" height="1"/><rect x="679" y="88" width="18" height="1"/><rect x="685" y="92" width="12" height="1"/><rect x="673" y="96" width="24" height="1"/><rect x="683" y="100" width="14" height="1"/><rect x="677" y="104" width="20" height="1"/></g><g fill="#fff" shape-rendering="crispEdges"><rect x="722" y="84" width="24" height="1.2"/><rect x="725" y="86" width="18" height="1.2"/><rect x="724" y="88" width="20" height="1.2"/></g><g fill="#1e1e1e" shape-rendering="crispEdges"><rect x="722" y="83" width="24" height="1"/><rect x="725" y="85" width="18" height="1"/><rect x="724" y="87" width="20" height="1"/></g><path d="M733 106V95.80000000000001H730L734 91.4L738 95.80000000000001H735V106Z" fill="#e8501c"/><g fill="#fff" shape-rendering="crispEdges"><rect x="763" y="93" width="24" height="1.2"/><rect x="766" y="95" width="18" height="1.2"/><rect x="765" y="97" width="20" height="1.2"/></g><g fill="#1e1e1e" shape-rendering="crispEdges"><rect x="763" y="92" width="24" height="1"/><rect x="766" y="94" width="18" height="1"/><rect x="765" y="96" width="20" height="1"/></g><path d="M774 79V85.1H771L775 89.5L779 85.1H776V79Z" fill="#e8501c"/><path d="M774 111V104.7H771L775 100.3L779 104.7H776V111Z" fill="#e8501c"/><g fill="#fff" shape-rendering="crispEdges"><rect x="804" y="102" width="24" height="1.2"/><rect x="807" y="104" width="18" height="1.2"/><rect x="806" y="106" width="20" height="1.2"/></g><g fill="#1e1e1e" shape-rendering="crispEdges"><rect x="804" y="101" width="24" height="1"/><rect x="807" y="103" width="18" height="1"/><rect x="806" y="105" width="20" height="1"/></g><path d="M815 84V94.1H812L816 98.5L820 94.1H817V84Z" fill="#e8501c"/><g fill="#fff" shape-rendering="crispEdges"><rect x="853" y="85" width="24" height="1.2"/><rect x="853" y="87" width="24" height="1.2"/><rect x="853" y="89" width="24" height="1.2"/><rect x="853" y="91" width="11" height="1.2"/><rect x="853" y="104" width="24" height="1.2"/><rect x="853" y="106" width="24" height="1.2"/></g><g fill="#1e1e1e" shape-rendering="crispEdges"><rect x="853" y="84" width="24" height="1"/><rect x="853" y="86" width="24" height="1"/><rect x="853" y="88" width="24" height="1"/><rect x="853" y="90" width="11" height="1"/><rect x="853" y="103" width="24" height="1"/><rect x="853" y="105" width="24" height="1"/></g><path d="M865.5 91.6H872.8V96" stroke="#e8501c" stroke-width="1.9" fill="none"/><path d="M868.8 95.5L872.8 100.2L876.8 95.5Z" fill="#e8501c"/><rect x="902.8" y="84.1" width="22.8" height="22" rx="1.5" fill="#e0e0e0" stroke="#c4c4c4" stroke-width="1.1"/><path d="M911.3 84.1V106.1M902.8 87.5H925.5999999999999M902.8 102.7H925.5999999999999M902.8 91.3H911.3M902.8 95H911.3M902.8 98.8H911.3M918.4 84.1V87.5M918.4 102.7V106.1" stroke="#c4c4c4" stroke-width="1"/><rect x="943.9" y="84.1" width="22.8" height="22" rx="1.5" fill="#e0e0e0" stroke="#c4c4c4" stroke-width="1.1"/><path d="M952.4 84.1V106.1M943.9 87.5H966.6999999999999M943.9 102.7H966.6999999999999M943.9 91.3H952.4M943.9 95H952.4M943.9 98.8H952.4M959.5 84.1V87.5M959.5 102.7V106.1" stroke="#c4c4c4" stroke-width="1"/><rect x="984.7" y="84.1" width="22.8" height="22" rx="1.5" fill="#e0e0e0" stroke="#c4c4c4" stroke-width="1.1"/><path d="M992.3000000000001 84.1V106.1M999.9000000000001 84.1V106.1M984.7 87.5H1007.5M984.7 102.7H1007.5M984.7 91.3H1007.5M984.7 95H1007.5M984.7 98.8H1007.5" stroke="#c4c4c4" stroke-width="1"/><rect x="991.4000000000001" y="89.6" width="9.6" height="10.2" rx="1.2" fill="#e0e0e0" stroke="#b4b4b4" stroke-width="1"/><path d="M992.2 91L995.7 95L992.2 99ZM1000.2 91L996.7 95L1000.2 99Z" fill="#b8b8b8"/><rect x="1030.5" y="86.9" width="24.6" height="16.4" rx="2" fill="#7b9ef0" stroke="#222" stroke-width="1.1"/><circle cx="1043" cy="95" r="3.6" fill="none" stroke="#fff" stroke-width="1.8"/><path d="M1066 94.8H1072.7L1069.35 98.7Z" fill="#000"/><rect x="1084.9" y="82.8" width="24.6" height="24.6" rx="2" fill="#d858c8" stroke="#222" stroke-width="1.1"/><text x="1097.2" y="101.8" text-anchor="middle" font-family="Liberation Sans" font-weight="bold" font-size="17" fill="#fff">%</text><rect x="1125.7" y="82.8" width="24.6" height="24.6" rx="2" fill="#a8d84a" stroke="#222" stroke-width="1.1"/><rect x="1129" y="90.2" width="5.6" height="9.6" rx="2.8" fill="none" stroke="#3e3a4c" stroke-width="1.9"/><rect x="1141.2" y="90.2" width="5.6" height="9.6" rx="2.8" fill="none" stroke="#3e3a4c" stroke-width="1.9"/><rect x="1136.8" y="99.6" width="1.9" height="1.9" fill="#3e3a4c"/><rect x="1167" y="82.8" width="24.6" height="24.6" rx="2" fill="#3aaba0" stroke="#222" stroke-width="1.1"/><path d="M1171.3 92.3L1174.6 90V100.6M1185.6 90H1178.8V94.8H1184.8V100H1178.2M1168.5 91V98.5M1190 91V98.5" stroke="#fff" stroke-width="2" fill="none"/><g stroke="#fff" stroke-width="4"><rect x="1222" y="89.25" width="5.3" height="10.25" rx="2.65" fill="none"/><rect x="1232.3" y="89.25" width="5.3" height="10.25" rx="2.65" fill="none"/></g><rect x="1217" y="97.8" width="2.2" height="2" fill="#fff" stroke="#fff" stroke-width="1.8"/><g stroke="#1a1a1a" stroke-width="2"><rect x="1222" y="89.25" width="5.3" height="10.25" rx="2.65" fill="none"/><rect x="1232.3" y="89.25" width="5.3" height="10.25" rx="2.65" fill="none"/></g><rect x="1217" y="97.8" width="2.2" height="2" fill="#1a1a1a"/><circle cx="1238.5" cy="100.5" r="4.5" fill="#3aa82a"/><path d="M1238.5 98V103M1236 100.5H1241" stroke="#fff" stroke-width="1.3"/><g stroke="#fff" stroke-width="4"><rect x="1263" y="89.25" width="5.3" height="10.25" rx="2.65" fill="none"/><rect x="1273.3" y="89.25" width="5.3" height="10.25" rx="2.65" fill="none"/></g><rect x="1257.8" y="97.8" width="2.2" height="2" fill="#fff" stroke="#fff" stroke-width="1.8"/><g stroke="#1a1a1a" stroke-width="2"><rect x="1263" y="89.25" width="5.3" height="10.25" rx="2.65" fill="none"/><rect x="1273.3" y="89.25" width="5.3" height="10.25" rx="2.65" fill="none"/></g><rect x="1257.8" y="97.8" width="2.2" height="2" fill="#1a1a1a"/><circle cx="1279.5" cy="100.5" r="4.5" fill="#d4142a"/><path d="M1277.9 98.9L1281.1 102.1M1281.1 98.9L1277.9 102.1" stroke="#fff" stroke-width="1.1"/><g fill="#fff" shape-rendering="crispEdges"><rect x="1309" y="84" width="22" height="1.2"/><rect x="1309" y="87" width="22" height="1.2"/><rect x="1317" y="90" width="14" height="1.2"/><rect x="1317" y="93" width="14" height="1.2"/><rect x="1317" y="96" width="14" height="1.2"/><rect x="1317" y="99" width="14" height="1.2"/><rect x="1309" y="102" width="22" height="1.2"/><rect x="1309" y="105" width="22" height="1.2"/></g><g fill="#1e1e1e" shape-rendering="crispEdges"><rect x="1309" y="83" width="22" height="1"/><rect x="1309" y="86" width="22" height="1"/><rect x="1317" y="89" width="14" height="1"/><rect x="1317" y="92" width="14" height="1"/><rect x="1317" y="95" width="14" height="1"/><rect x="1317" y="98" width="14" height="1"/><rect x="1309" y="101" width="22" height="1"/><rect x="1309" y="104" width="22" height="1"/></g><path d="M1306 92L1310.8 95L1306 98Z" fill="#e8501c"/><g fill="#fff" shape-rendering="crispEdges"><rect x="1346" y="84" width="22" height="1.2"/><rect x="1346" y="87" width="22" height="1.2"/><rect x="1346" y="90" width="14" height="1.2"/><rect x="1346" y="93" width="14" height="1.2"/><rect x="1346" y="96" width="14" height="1.2"/><rect x="1346" y="99" width="14" height="1.2"/><rect x="1346" y="102" width="22" height="1.2"/><rect x="1346" y="105" width="22" height="1.2"/></g><g fill="#1e1e1e" shape-rendering="crispEdges"><rect x="1346" y="83" width="22" height="1"/><rect x="1346" y="86" width="22" height="1"/><rect x="1346" y="89" width="14" height="1"/><rect x="1346" y="92" width="14" height="1"/><rect x="1346" y="95" width="14" height="1"/><rect x="1346" y="98" width="14" height="1"/><rect x="1346" y="101" width="22" height="1"/><rect x="1346" y="104" width="22" height="1"/></g><path d="M1371 92L1366.2 95L1371 98Z" fill="#e8501c"/><rect x="1394.2" y="83" width="23.7" height="24" fill="#fff" stroke="#e8501c" stroke-width="1.8"/><rect x="1395.6" y="84.4" width="20.9" height="21.2" fill="none" stroke="#222" stroke-width="0.9"/><path d="M1429.4 95H1436L1432.7 98.8Z" fill="#000"/><rect x="1446.2" y="83" width="23.7" height="24" fill="#fff" stroke="#e8501c" stroke-width="1.8"/><rect x="1447.6" y="84.4" width="20.9" height="21.2" fill="none" stroke="#222" stroke-width="0.9"/><circle cx="1468.5" cy="105.3" r="4.6" fill="#c4c4c4" stroke="#7a7a7a" stroke-width="2" stroke-dasharray="1.5 1.4"/><circle cx="1468.5" cy="105.3" r="3.4" fill="#c8c8c8" stroke="#777" stroke-width="0.6"/><circle cx="1468.5" cy="105.3" r="1.4" fill="#fff" stroke="#777" stroke-width="0.5"/><path d="M1480.9 95H1487.9L1484.4 98.8Z" fill="#000"/><rect x="1498" y="83" width="23.7" height="24" fill="#fff" stroke="#e8501c" stroke-width="1.8"/><rect x="1499.4" y="84.4" width="20.9" height="21.2" fill="none" stroke="#222" stroke-width="0.9"/><path d="M1515 92L1512.5 98Q1512.5 100.5 1515 100.5Q1517.5 100.5 1517.5 98Z" fill="#111"/><rect x="1494.2" y="102.6" width="31.8" height="8.2" fill="#2a5a9a"/><path d="M1533.3 95H1540L1536.65 98.8Z" fill="#000"/><circle cx="1591.4" cy="94.6" r="6.3" fill="#fff" stroke="#333" stroke-width="1"/><path d="M1587.8 91.6L1590.6 94.6L1587.8 97.6M1591 91.6L1593.8 94.6L1591 97.6" stroke="#222" stroke-width="0.9" fill="none"/></svg>
<svg class="a" style="left:0;top:0" width="1600" height="400" viewBox="0 0 1600 400"><rect x="1564" y="176" width="16.5" height="6.6" rx="3.3" fill="#e8501c"/><circle cx="1577" cy="179.3" r="2.4" fill="#fff"/><rect x="1564" y="183.8" width="16.5" height="6.6" rx="3.3" fill="#e8501c"/><circle cx="1567.5" cy="187.1" r="2.4" fill="#fff"/><path d="M1572.3 226.5L1576.8 216.3L1581.3 226.5M1574 222.5H1579.6" stroke="#fff" stroke-width="3.6" fill="none"/><path d="M1572.3 226.5L1576.8 216.3L1581.3 226.5M1574 222.5H1579.6" stroke="#111" stroke-width="1.9" fill="none"/><g transform="rotate(45 1570.8 226.7)"><rect x="1562.5" y="220.8" width="12.5" height="7" rx="1.5" fill="none" stroke="#444" stroke-width="0.9"/><rect x="1564.8" y="223.3" width="12.5" height="7" rx="1.5" fill="#fff" stroke="#333" stroke-width="1"/></g><path d="M1566.3 231.3L1562.2 235.3" stroke="#f4907a" stroke-width="3.6" stroke-linecap="round"/><rect x="1562.5" y="258.5" width="15" height="12" rx="1.5" fill="#d858c8" stroke="#333" stroke-width="1"/><rect x="1566.5" y="263" width="15" height="13" rx="1.5" fill="#d858c8" stroke="#333" stroke-width="1"/><path d="M1569 273.5L1572 268.5L1574 271L1575.5 269.5L1578.5 273.5Z" fill="#fff"/><circle cx="1578.5" cy="266.5" r="1" fill="#fff"/><circle cx="1572" cy="308.7" r="9.6" fill="#4a7ae0" stroke="#333" stroke-width="1"/><path d="M1567 314L1571 307.5L1573.5 310Z" fill="#fff"/><path d="M1577 303.5L1571 307.5L1573.5 310Z" fill="#e02020"/><text x="1565" y="357" font-family="Liberation Sans" font-size="20" fill="#222">f</text><path d="M1573.5 352L1580.5 359M1580.5 352L1573.5 359" stroke="#222" stroke-width="1.6"/></svg>
<svg class="a" style="left:0;top:840px" width="1600" height="60" viewBox="0 840 1600 60"><path d="M17 859L13 865.5L17 872" stroke="#666" stroke-width="1" fill="none"/><circle cx="10.7" cy="865.5" r="0.8" fill="#666"/><path d="M32.5 860.5V870.5" stroke="#777" stroke-width="1.6"/><path d="M40 860.5L33.5 865.5L40 870.5ZM47 860.5L40.5 865.5L47 870.5Z" fill="#777"/><path d="M70.5 860.5V870.5" stroke="#777" stroke-width="1.6"/><path d="M56 860.5L62.5 865.5L56 870.5ZM63 860.5L69.5 865.5L63 870.5Z" fill="#777"/><path d="M84.5 859L88.5 865.5L84.5 872" stroke="#666" stroke-width="1" fill="none"/><circle cx="92.5" cy="865.5" r="0.8" fill="#666"/><rect x="108.5" y="858.5" width="13" height="13" rx="2.5" fill="#fff" stroke="#444" stroke-width="1"/><circle cx="119.5" cy="870" r="3.6" fill="#3aa82a"/><path d="M119.5 867.8V872.2M117.3 870H121.7" stroke="#fff" stroke-width="1.1"/><rect x="949.5" y="887.5" width="8" height="5" fill="none" stroke="#e8501c" stroke-width="1"/><path d="M959.5 886H963.5M961.5 886V893.5M959.5 893.5H963.5" stroke="#333" stroke-width="1"/><path d="M985.5 886V889H983.5L987.5 893L991.5 889H989.5V886Z" fill="#7cc83c" stroke="#333" stroke-width="0.7"/><path d="M983.5 894.5H991.5" stroke="#333" stroke-width="0.8"/><circle cx="993" cy="885.2" r="1.1" fill="#d4142a"/></svg>
<div class="a" style="left:127px;top:25px;width:337px;height:531px;background:#fafafa;border:1px solid #a8a8a8;border-top:none;box-shadow:1px 2px 3px rgba(0,0,0,.12)"></div>
<div class="a" style="left:128px;top:175px;width:335px;height:26px;background:#dcdcdc"></div>
<div class="a t" style="left:157px;top:30.4px;font-size:14px;letter-spacing:0.3px;color:#3e3e3e">Image...</div>
<div class="a t" style="left:157px;top:55.3px;font-size:14px;letter-spacing:0.3px;color:#3e3e3e">Chart...</div>
<div class="a t" style="left:157px;top:80.2px;font-size:14px;letter-spacing:0.3px;color:#3e3e3e">Pivot Table...</div>
<div class="a t" style="left:157px;top:105.6px;font-size:14px;letter-spacing:0.3px;color:#3e3e3e">Media</div>
<svg style="left:446px;top:107px" width="7" height="11"><path d="M1 1L6 5.5L1 10" stroke="#555" stroke-width="1.2" fill="none"/></svg>
<div class="a t" style="left:157px;top:130.5px;font-size:14px;letter-spacing:0.3px;color:#3e3e3e">Object</div>
<svg style="left:446px;top:131.9px" width="7" height="11"><path d="M1 1L6 5.5L1 10" stroke="#555" stroke-width="1.2" fill="none"/></svg>
<div class="a t" style="left:157px;top:155.4px;font-size:14px;letter-spacing:0.3px;color:#3e3e3e">Shape</div>
<svg style="left:446px;top:156.8px" width="7" height="11"><path d="M1 1L6 5.5L1 10" stroke="#555" stroke-width="1.2" fill="none"/></svg>
<div class="a t" style="left:157px;top:181.1px;font-size:14px;letter-spacing:0.3px;color:#3e3e3e">Function...</div>
<div class="a t" style="left:300px;width:154px;top:181.1px;text-align:right;font-size:14px;letter-spacing:0.25px;color:#8a8a8a">Ctrl+F2</div>
<div class="a t" style="left:157px;top:206.4px;font-size:14px;letter-spacing:0.3px;color:#3e3e3e">Named Range or Expression...</div>
<div class="a t" style="left:157px;top:233.0px;font-size:14px;letter-spacing:0.3px;color:#3e3e3e">Text Box</div>
<div class="a t" style="left:157px;top:257.9px;font-size:14px;letter-spacing:0.3px;color:#3e3e3e">Comment</div>
<div class="a t" style="left:300px;width:154px;top:257.9px;text-align:right;font-size:14px;letter-spacing:0.25px;color:#8a8a8a">Ctrl+Alt+C</div>
<div class="a t" style="left:157px;top:283.0px;font-size:14px;letter-spacing:0.3px;color:#3e3e3e">Floating Frame...</div>
<div class="a t" style="left:157px;top:307.5px;font-size:14px;letter-spacing:0.3px;color:#3e3e3e">Fontwork...</div>
<div class="a t" style="left:157px;top:334.1px;font-size:14px;letter-spacing:0.3px;color:#3e3e3e">Hyperlink...</div>
<div class="a t" style="left:300px;width:154px;top:334.1px;text-align:right;font-size:14px;letter-spacing:0.25px;color:#8a8a8a">Ctrl+K</div>
<div class="a t" style="left:157px;top:358.6px;font-size:14px;letter-spacing:0.3px;color:#3e3e3e">Special Character...</div>
<div class="a t" style="left:157px;top:384.1px;font-size:14px;letter-spacing:0.3px;color:#3e3e3e">Formatting Mark</div>
<svg style="left:446px;top:385.5px" width="7" height="11"><path d="M1 1L6 5.5L1 10" stroke="#555" stroke-width="1.2" fill="none"/></svg>
<div class="a t" style="left:157px;top:409.7px;font-size:14px;letter-spacing:0.3px;color:#3e3e3e">Date</div>
<div class="a t" style="left:300px;width:154px;top:409.7px;text-align:right;font-size:14px;letter-spacing:0.25px;color:#8a8a8a">Ctrl+;</div>
<div class="a t" style="left:157px;top:434.8px;font-size:14px;letter-spacing:0.3px;color:#3e3e3e">Time</div>
<div class="a t" style="left:300px;width:154px;top:434.8px;text-align:right;font-size:14px;letter-spacing:0.25px;color:#8a8a8a">Shift+Ctrl+;</div>
<div class="a t" style="left:157px;top:459.7px;font-size:14px;letter-spacing:0.3px;color:#3e3e3e">Field</div>
<svg style="left:446px;top:461.1px" width="7" height="11"><path d="M1 1L6 5.5L1 10" stroke="#555" stroke-width="1.2" fill="none"/></svg>
<div class="a t" style="left:157px;top:484.8px;font-size:14px;letter-spacing:0.3px;color:#3e3e3e">Headers and Footers...</div>
<div class="a t" style="left:157px;top:510.8px;font-size:14px;letter-spacing:0.3px;color:#3e3e3e">Form Control</div>
<svg style="left:446px;top:512.2px" width="7" height="11"><path d="M1 1L6 5.5L1 10" stroke="#555" stroke-width="1.2" fill="none"/></svg>
<div class="a t" style="left:157px;top:535.9px;font-size:14px;letter-spacing:0.3px;color:#3e3e3e">Signature Line...</div>
<div class="a" style="left:128px;top:226px;width:335px;height:1px;background:#e0e0e0"></div>
<div class="a" style="left:128px;top:327px;width:335px;height:1px;background:#e0e0e0"></div>
<div class="a" style="left:128px;top:403px;width:335px;height:1px;background:#e0e0e0"></div>
<div class="a" style="left:128px;top:504px;width:335px;height:1px;background:#e0e0e0"></div></body></html>
